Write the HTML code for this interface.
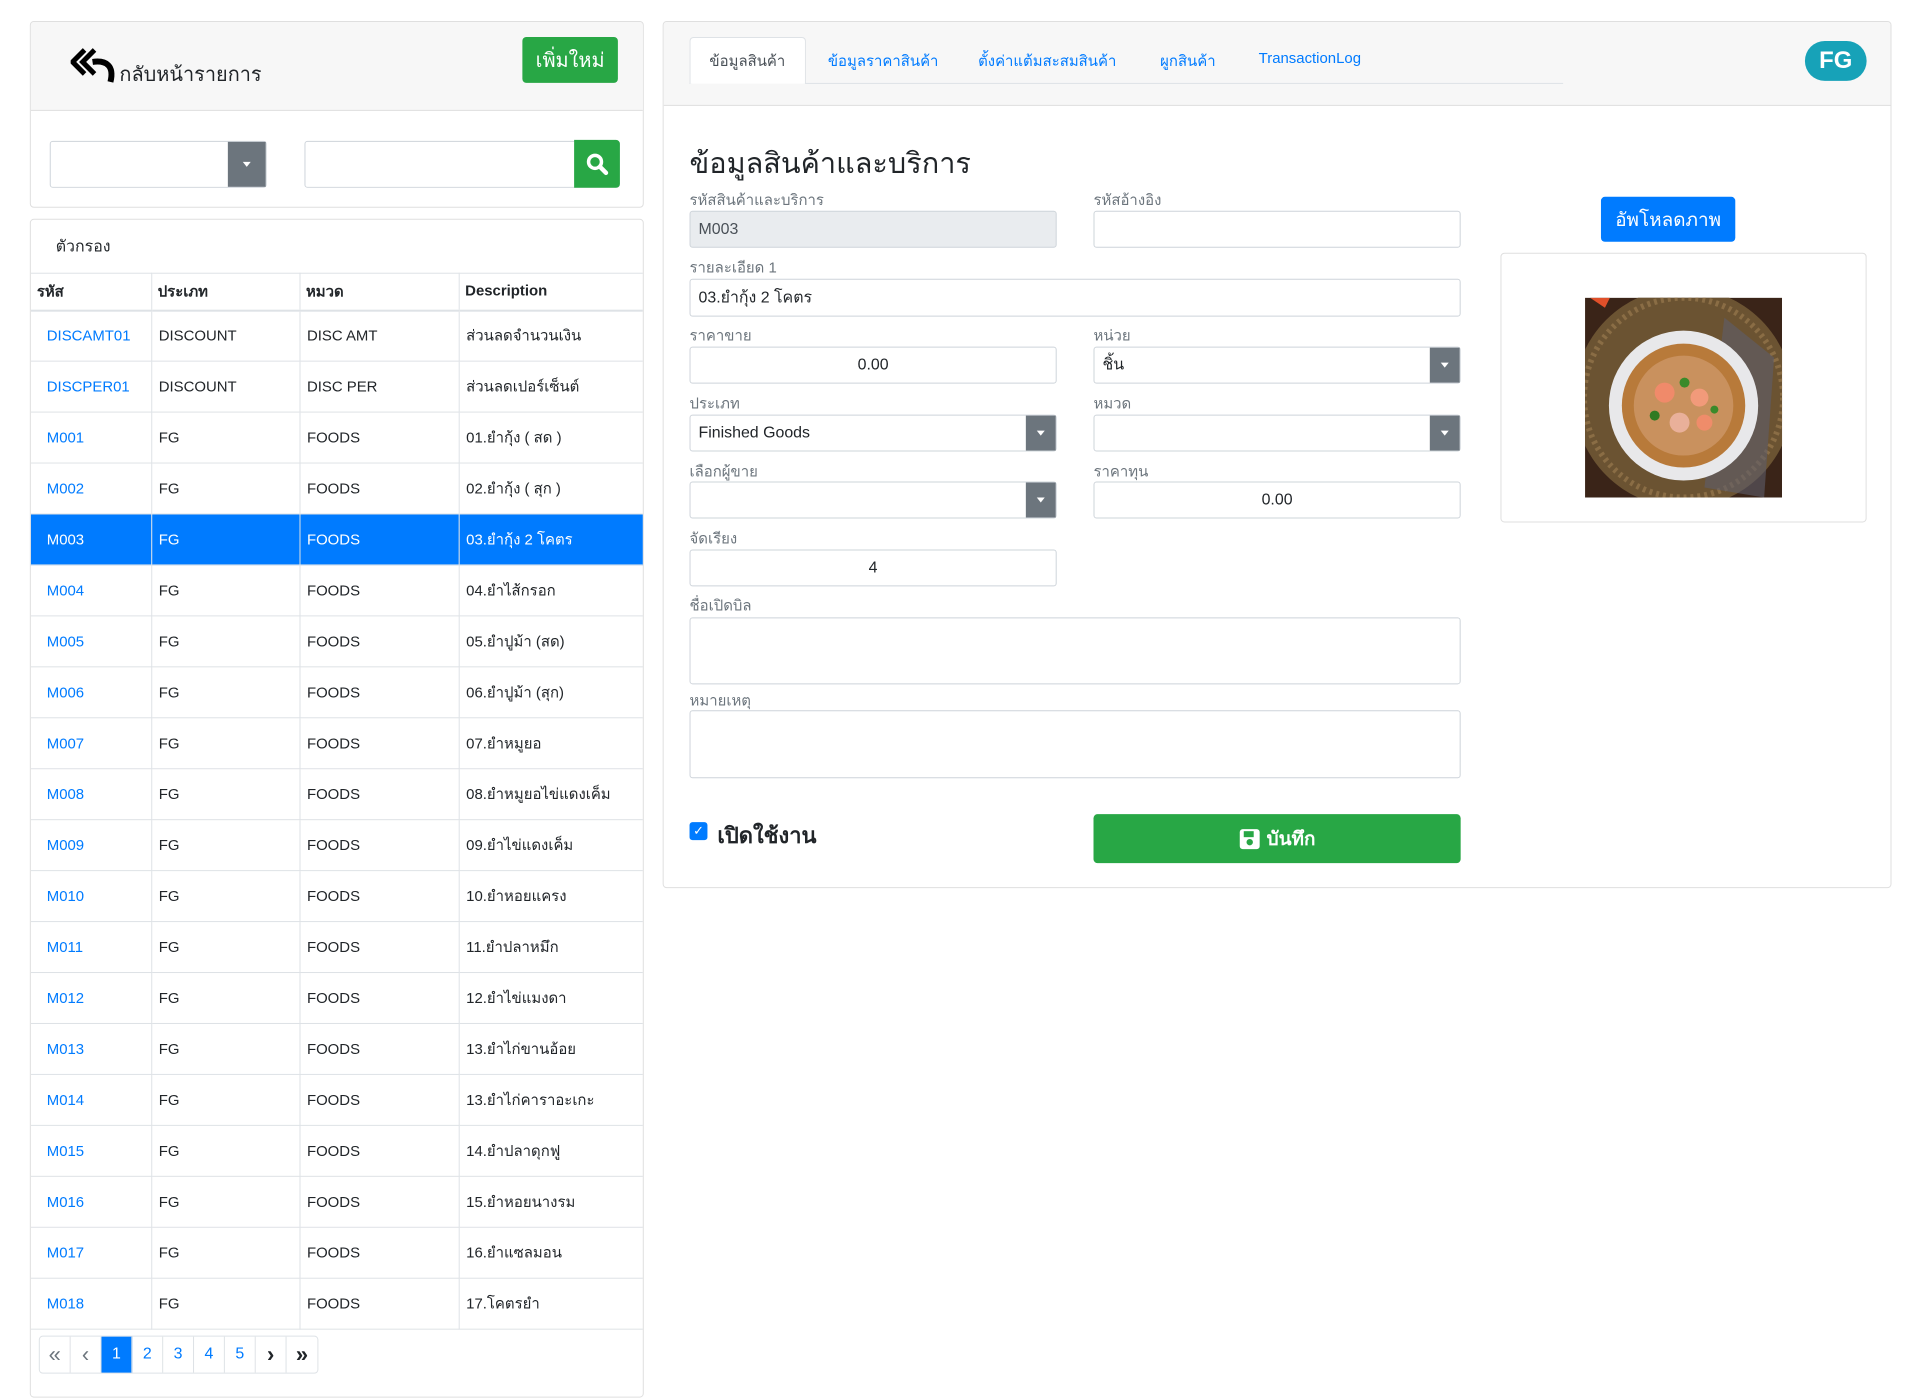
<!DOCTYPE html>
<html><head><meta charset="utf-8">
<style>
*{box-sizing:border-box;margin:0;padding:0}
body{width:1920px;height:1385px;overflow:hidden;background:#fff;font-family:"Liberation Sans",sans-serif;color:#212529;font-size:15px;position:relative}
#wrap{position:absolute;left:0;top:0;width:1920px;height:1400px;transform:scale(0.995,0.999);transform-origin:0 0}
.abs{position:absolute}
.card{position:absolute;border:1px solid #dfdfdf;border-radius:4px;background:#fff;overflow:hidden}
.btn{position:absolute;color:#fff;border-radius:4px;display:flex;align-items:center;justify-content:center}
.inp{position:absolute;border:1px solid #ced4da;border-radius:3px;background:#fff;font-size:16px;display:flex;align-items:center;padding-left:8px}
.dd{position:absolute;right:0;top:0;bottom:0;width:30px;background:#6c757d;display:flex;align-items:center;justify-content:center}
.dd:after{content:"";border-left:4px solid transparent;border-right:4px solid transparent;border-top:5px solid #fff}
.lbl{position:absolute;color:#6c757d;font-size:15px}
table{border-collapse:collapse;position:absolute;left:0;top:53px;width:616px;font-size:15px}
td,th{border-right:1px solid #dee2e6;border-bottom:1px solid #dee2e6;text-align:left;padding-left:7px;height:51px}
th{height:37px;border-top:1px solid #dee2e6;border-bottom:2px solid #dee2e6;font-weight:bold;padding-left:6px}
td:last-child,th:last-child{border-right:none}
td:first-child{color:#007bff;padding-left:16px}
tr.sel td{background:#007bff;color:#fff}
.pg{position:absolute;left:8px;height:38px;display:flex;border:1px solid #dee2e6;border-radius:4px}
.pg div{width:31px;border-right:1px solid #dee2e6;display:flex;align-items:center;justify-content:center;color:#007bff;font-size:16px}
.pg div:last-child{border-right:none}
.tab{position:absolute;color:#007bff;font-size:15px}
</style></head><body><div id="wrap">

<div class="card" style="left:30px;top:21px;width:617px;height:187px">
  <div class="abs" style="left:0;top:0;width:617px;height:89px;background:#f7f7f7;border-bottom:1px solid #dfdfdf"></div>
  <svg class="abs" style="left:40px;top:24px" width="48" height="38" viewBox="0 0 48 38"><path d="M14 4 L2 16 L14 28 M24 4 L12 16 L24 28" fill="none" stroke="#000" stroke-width="5"/><path d="M22 16 C36 14 44 20 40 36" fill="none" stroke="#000" stroke-width="6"/></svg>
  <div class="abs" style="left:89px;top:36px;font-size:20px">กลับหน้ารายการ</div>
  <div class="btn" style="left:494px;top:15px;width:96px;height:46px;background:#28a745;font-size:20px">เพิ่มใหม่</div>
  <div class="inp" style="left:19px;top:119px;width:218px;height:47px"><div class="dd" style="width:38px"></div></div>
  <div class="inp" style="left:275px;top:119px;width:317px;height:47px"></div>
  <div class="btn" style="left:546px;top:118px;width:46px;height:48px;background:#28a745;border-radius:0 4px 4px 0">
    <svg width="24" height="24" viewBox="0 0 24 24"><circle cx="10" cy="10" r="6.5" fill="none" stroke="#fff" stroke-width="3.5"/><path d="M15 15 L21 21" stroke="#fff" stroke-width="4.5" stroke-linecap="round"/></svg></div>
</div>

<div class="card" style="left:30px;top:219px;width:617px;height:1180px">
  <div class="abs" style="left:25px;top:15px;font-size:16px">ตัวกรอง</div>
  <table>
    <tr><th style="width:121px">รหัส</th><th style="width:149px">ประเภท</th><th style="width:160px">หมวด</th><th>Description</th></tr>
    <tr><td>DISCAMT01</td><td>DISCOUNT</td><td>DISC AMT</td><td>ส่วนลดจำนวนเงิน</td></tr>
    <tr><td>DISCPER01</td><td>DISCOUNT</td><td>DISC PER</td><td>ส่วนลดเปอร์เซ็นต์</td></tr>
    <tr><td>M001</td><td>FG</td><td>FOODS</td><td>01.ยำกุ้ง ( สด )</td></tr>
    <tr><td>M002</td><td>FG</td><td>FOODS</td><td>02.ยำกุ้ง ( สุก )</td></tr>
    <tr class="sel"><td>M003</td><td>FG</td><td>FOODS</td><td>03.ยำกุ้ง 2 โคตร</td></tr>
    <tr><td>M004</td><td>FG</td><td>FOODS</td><td>04.ยำไส้กรอก</td></tr>
    <tr><td>M005</td><td>FG</td><td>FOODS</td><td>05.ยำปูม้า (สด)</td></tr>
    <tr><td>M006</td><td>FG</td><td>FOODS</td><td>06.ยำปูม้า (สุก)</td></tr>
    <tr><td>M007</td><td>FG</td><td>FOODS</td><td>07.ยำหมูยอ</td></tr>
    <tr><td>M008</td><td>FG</td><td>FOODS</td><td>08.ยำหมูยอไข่แดงเค็ม</td></tr>
    <tr><td>M009</td><td>FG</td><td>FOODS</td><td>09.ยำไข่แดงเค็ม</td></tr>
    <tr><td>M010</td><td>FG</td><td>FOODS</td><td>10.ยำหอยแครง</td></tr>
    <tr><td>M011</td><td>FG</td><td>FOODS</td><td>11.ยำปลาหมึก</td></tr>
    <tr><td>M012</td><td>FG</td><td>FOODS</td><td>12.ยำไข่แมงดา</td></tr>
    <tr><td>M013</td><td>FG</td><td>FOODS</td><td>13.ยำไก่ขานอ้อย</td></tr>
    <tr><td>M014</td><td>FG</td><td>FOODS</td><td>13.ยำไก่คาราอะเกะ</td></tr>
    <tr><td>M015</td><td>FG</td><td>FOODS</td><td>14.ยำปลาดุกฟู</td></tr>
    <tr><td>M016</td><td>FG</td><td>FOODS</td><td>15.ยำหอยนางรม</td></tr>
    <tr><td>M017</td><td>FG</td><td>FOODS</td><td>16.ยำแซลมอน</td></tr>
    <tr><td>M018</td><td>FG</td><td>FOODS</td><td>17.โคตรยำ</td></tr>
  </table>
  <div class="pg" style="top:1117px">
    <div style="color:#6c757d;font-size:22px">«</div><div style="color:#6c757d;font-size:22px">‹</div><div style="background:#007bff;color:#fff">1</div><div>2</div><div>3</div><div>4</div><div>5</div><div style="color:#212529;font-size:22px;font-weight:bold">›</div><div style="color:#212529;font-size:22px;font-weight:bold">»</div>
  </div>
</div>

<div class="card" style="left:666px;top:21px;width:1235px;height:868px">
  <div class="abs" style="left:0;top:0;width:1235px;height:84px;background:#f7f7f7;border-bottom:1px solid #dfdfdf"></div>
  <div class="abs" style="left:26px;top:61px;width:878px;height:1px;background:#dee2e6"></div>
  <div class="abs" style="left:26px;top:15px;width:117px;height:47px;background:#fff;border:1px solid #dee2e6;border-bottom:none;border-radius:4px 4px 0 0"></div>
  <div class="tab" style="left:46px;top:27px;color:#495057">ข้อมูลสินค้า</div>
  <div class="tab" style="left:165px;top:27px">ข้อมูลราคาสินค้า</div>
  <div class="tab" style="left:316px;top:27px">ตั้งค่าแต้มสะสมสินค้า</div>
  <div class="tab" style="left:499px;top:27px">ผูกสินค้า</div>
  <div class="tab" style="left:598px;top:28px">TransactionLog</div>
  <div class="abs" style="left:1147px;top:19px;width:62px;height:40px;border-radius:20px;background:#17a2b8;color:#fff;font-size:24px;font-weight:bold;display:flex;align-items:center;justify-content:center">FG</div>

  <div class="abs" style="left:26px;top:118px;font-size:29px">ข้อมูลสินค้าและบริการ</div>

  <div class="lbl" style="left:26px;top:166px">รหัสสินค้าและบริการ</div>
  <div class="inp" style="left:26px;top:189px;width:369px;height:37px;background:#e9ecef;color:#495057">M003</div>
  <div class="lbl" style="left:432px;top:166px">รหัสอ้างอิง</div>
  <div class="inp" style="left:432px;top:189px;width:369px;height:37px"></div>

  <div class="lbl" style="left:26px;top:234px">รายละเอียด 1</div>
  <div class="inp" style="left:26px;top:257px;width:775px;height:38px">03.ยำกุ้ง 2 โคตร</div>

  <div class="lbl" style="left:26px;top:302px">ราคาขาย</div>
  <div class="inp" style="left:26px;top:325px;width:369px;height:37px;justify-content:center;padding:0">0.00</div>
  <div class="lbl" style="left:432px;top:302px">หน่วย</div>
  <div class="inp" style="left:432px;top:325px;width:369px;height:37px">ชิ้น<div class="dd"></div></div>

  <div class="lbl" style="left:26px;top:370px">ประเภท</div>
  <div class="inp" style="left:26px;top:393px;width:369px;height:37px">Finished Goods<div class="dd"></div></div>
  <div class="lbl" style="left:432px;top:370px">หมวด</div>
  <div class="inp" style="left:432px;top:393px;width:369px;height:37px"><div class="dd"></div></div>

  <div class="lbl" style="left:26px;top:438px">เลือกผู้ขาย</div>
  <div class="inp" style="left:26px;top:460px;width:369px;height:37px"><div class="dd"></div></div>
  <div class="lbl" style="left:432px;top:438px">ราคาทุน</div>
  <div class="inp" style="left:432px;top:460px;width:369px;height:37px;justify-content:center;padding:0">0.00</div>

  <div class="lbl" style="left:26px;top:505px">จัดเรียง</div>
  <div class="inp" style="left:26px;top:528px;width:369px;height:37px;justify-content:center;padding:0">4</div>

  <div class="lbl" style="left:26px;top:572px">ชื่อเปิดบิล</div>
  <div class="inp" style="left:26px;top:596px;width:775px;height:67px"></div>
  <div class="lbl" style="left:26px;top:667px">หมายเหตุ</div>
  <div class="inp" style="left:26px;top:689px;width:775px;height:68px"></div>

  <div class="abs" style="left:26px;top:801px;width:18px;height:18px;border-radius:3px;background:#007bff;color:#fff;font-size:13px;text-align:center;line-height:18px">✓</div>
  <div class="abs" style="left:54px;top:797px;font-size:22px;font-weight:bold">เปิดใช้งาน</div>
  <div class="btn" style="left:432px;top:793px;width:369px;height:49px;background:#28a745;font-size:19px;font-weight:bold">
    <svg width="22" height="22" viewBox="0 0 22 22" style="margin-right:6px"><rect x="1" y="1" width="20" height="20" rx="3" fill="#fff"/><rect x="5" y="3" width="10" height="6" fill="#28a745"/><circle cx="11" cy="14" r="3.2" fill="#28a745"/></svg>บันทึก</div>

  <div class="btn" style="left:942px;top:175px;width:135px;height:45px;background:#007bff;font-size:19px">อัพโหลดภาพ</div>
  <div class="abs" style="left:841px;top:231px;width:368px;height:270px;border:1px solid #dfdfdf;border-radius:4px"></div>
  <svg class="abs" style="left:926px;top:276px" width="198" height="200" viewBox="0 0 198 200">
    <rect width="198" height="200" fill="#3a2418"/>
    <circle cx="99" cy="100" r="110" fill="#6b5332"/>
    <circle cx="99" cy="100" r="100" fill="none" stroke="#8a6d45" stroke-width="6" stroke-dasharray="3 4"/>
    <path d="M140 20 L190 60 L180 200 L120 190Z" fill="#5e5e6a" opacity=".6"/>
    <circle cx="99" cy="108" r="75" fill="#e8e8ea"/>
    <circle cx="99" cy="108" r="62" fill="#b87a3a"/>
    <circle cx="99" cy="108" r="50" fill="#c9915e"/>
    <circle cx="80" cy="95" r="10" fill="#f08a6a"/><circle cx="115" cy="100" r="9" fill="#f29a7a"/><circle cx="95" cy="125" r="10" fill="#e9b09a"/><circle cx="120" cy="125" r="8" fill="#ef8c6a"/>
    <circle cx="100" cy="85" r="5" fill="#3a8a2a"/><circle cx="70" cy="118" r="5" fill="#2f7a22"/><circle cx="130" cy="112" r="4" fill="#3a8a2a"/>
    <path d="M5 0 L25 0 L20 10Z" fill="#e0502a"/>
  </svg>
</div>
</div></body></html>
